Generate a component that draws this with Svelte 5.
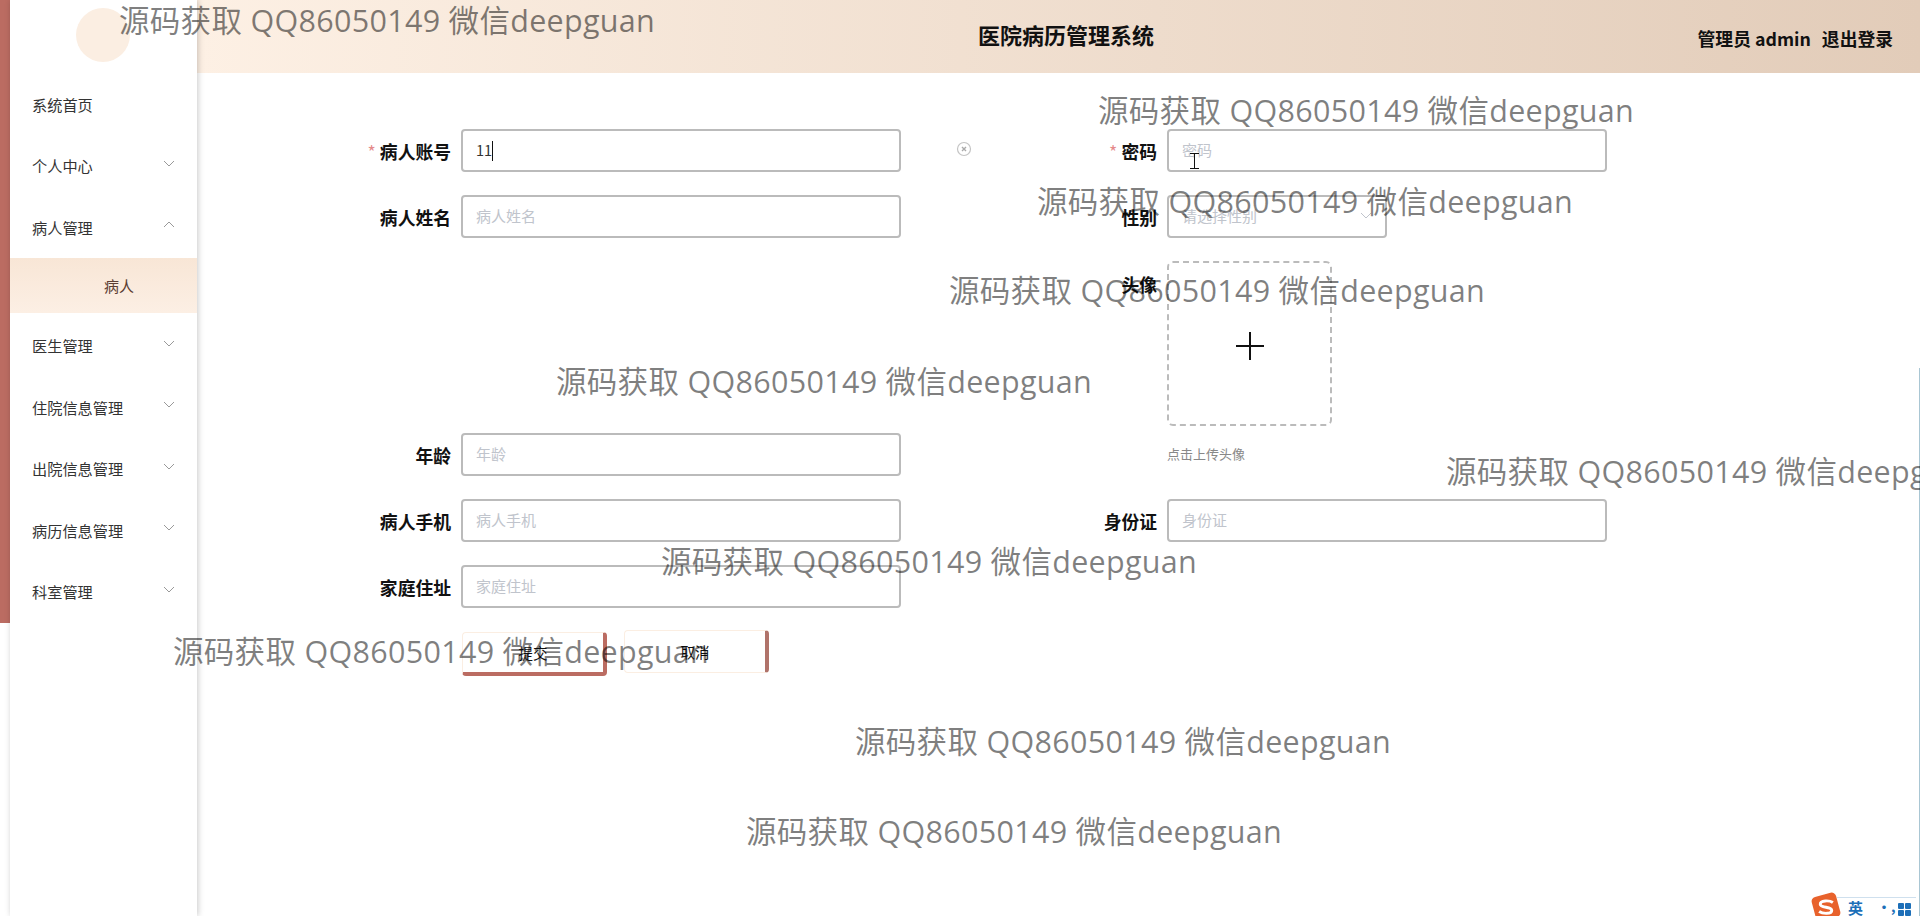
<script>
  const menu = [
    { name: '系统首页' },
    { name: '个人中心', arrow: 'down' },
    { name: '病人管理', arrow: 'up', sub: '病人' },
    { name: '医生管理', arrow: 'down' },
    { name: '住院信息管理', arrow: 'down' },
    { name: '出院信息管理', arrow: 'down' },
    { name: '病历信息管理', arrow: 'down' },
    { name: '科室管理', arrow: 'down' }
  ];
  const marks = [
    [119, 5], [1098, 95], [1037, 186], [949, 275], [556, 366],
    [1446, 456], [661, 546], [173, 636], [855, 726], [746, 816]
  ];
</script>

<div class="page">
  <div class="rail"></div>
  <aside class="side">
    <div class="logo"></div>
    <nav class="menu">
      {#each menu as item}
        <div class="item">
          <span>{item.name}</span>
          {#if item.arrow}
            <svg class="chev" width="12" height="7" viewBox="0 0 12 7">
              <path d={item.arrow === 'down' ? 'M1 1l5 5 5-5' : 'M1 6l5-5 5 5'} fill="none" stroke="#999" stroke-width="1" />
            </svg>
          {/if}
        </div>
        {#if item.sub}
          <div class="sub">{item.sub}</div>
        {/if}
      {/each}
    </nav>
  </aside>

  <main class="main">
    <header class="head">
      <div class="title">医院病历管理系统</div>
      <div class="user">
        <span>管理员 admin</span>
        <span>退出登录</span>
      </div>
    </header>

    <form class="form">
      <div class="field r1 c1">
        <span class="label"><i>*</i>病人账号</span>
        <div class="control">
          <input class="input" value="11" />
          <span class="caret"></span>
        </div>
      </div>
      <div class="field r1 c2">
        <span class="label"><i>*</i>密码</span>
        <div class="control"><input class="input" placeholder="密码" /></div>
      </div>

      <div class="field r2 c1">
        <span class="label">病人姓名</span>
        <div class="control"><input class="input" placeholder="病人姓名" /></div>
      </div>
      <div class="field r2 c2">
        <span class="label">性别</span>
        <div class="control select">
          <span class="ph">请选择性别</span>
          <svg width="12" height="7" viewBox="0 0 12 7">
            <path d="M1 1l5 5 5-5" fill="none" stroke="#c0c4cc" stroke-width="1" />
          </svg>
        </div>
      </div>

      <div class="field avatar c2">
        <span class="label top">头像</span>
        <div class="upload-wrap">
          <div class="upload">
            <svg width="28" height="28" viewBox="0 0 28 28">
              <path d="M14 0v28M0 14h28" stroke="#111" stroke-width="2" fill="none" />
            </svg>
          </div>
          <div class="hint">点击上传头像</div>
        </div>
      </div>

      <div class="field r4 c1">
        <span class="label">年龄</span>
        <div class="control"><input class="input" placeholder="年龄" /></div>
      </div>

      <div class="field r5 c1">
        <span class="label">病人手机</span>
        <div class="control"><input class="input" placeholder="病人手机" /></div>
      </div>
      <div class="field r5 c2">
        <span class="label">身份证</span>
        <div class="control"><input class="input" placeholder="身份证" /></div>
      </div>

      <div class="field r6 c1">
        <span class="label">家庭住址</span>
        <div class="control"><input class="input" placeholder="家庭住址" /></div>
      </div>

      <div class="actions">
        <button type="button" class="btn submit">提交</button>
        <button type="button" class="btn cancel">取消</button>
      </div>
    </form>
  </main>

  <svg class="clear" width="16" height="16" viewBox="0 0 16 16">
    <circle cx="8" cy="8" r="6.5" fill="none" stroke="#c4c4c4" stroke-width="1.200" />
    <path d="M6 6l4 4M10 6l-4 4" stroke="#aaa" stroke-width="1.400" />
  </svg>

  <svg class="ibeam" width="9" height="16" viewBox="0 0 9 16">
    <path d="M0 .5h9M0 15.5h9M4.5 .5v15" stroke="#111" stroke-width="1" fill="none" />
  </svg>

  <div class="edge"></div>

  <div class="ime">
    <svg class="ime-logo" width="32" height="32" viewBox="0 0 28 28">
      <rect x="3" y="3" width="22" height="22" rx="4" fill="#e8622c" transform="rotate(-15 14 14)" />
      <path d="M20 10c-3-2-11-2-11 1.500s10 2 10 5.500-8 3-11 1" fill="none" stroke="#fff" stroke-width="2.600" />
    </svg>
    <span class="ime-en">英</span>
    <span class="ime-p">·,</span>
    <span class="ime-grid"><b></b><b></b><b></b><b></b></span>
  </div>

  {#each marks as m}
    <div class="mark" style="left:{m[0]}px;top:{m[1]}px">源码获取 QQ86050149 微信deepguan</div>
  {/each}
</div>

<style>
  :global(body) {
    margin: 0;
    background: #fff;
  }

  .page {
    position: relative;
    display: flex;
    height: 100vh;
    overflow: hidden;
    align-items: flex-start;
    font-family: "Noto Sans CJK SC", "Liberation Sans", sans-serif;
    color: #111;
  }

  .rail {
    flex: none;
    width: 10px;
    height: 623px;
    background: #bb6c62;
  }

  .side {
    flex: none;
    width: 187px;
    height: 100%;
    background: #fff;
    box-shadow: 1px 0 6px rgba(0, 0, 0, 0.22);
    position: relative;
    z-index: 2;
  }

  .logo {
    position: absolute;
    left: 66px;
    top: 8px;
    width: 54px;
    height: 54px;
    border-radius: 50%;
    background: #fbeee2;
  }

  .menu {
    padding-top: 73px;
  }

  .item {
    display: flex;
    align-items: center;
    justify-content: space-between;
    height: 61.5px;
    padding: 0 22px;
    font-size: 15.200px;
    color: #333;
    box-sizing: border-box;
  }

  .chev {
    margin-top: -4px;
  }

  .sub {
    height: 55px;
    margin-bottom: 2px;
    padding-left: 94px;
    display: flex;
    align-items: center;
    font-size: 15px;
    color: #5b3d33;
    background: linear-gradient(180deg, #f8e6d6, #fcefe4);
  }

  .main {
    flex: 1;
    min-width: 0;
  }

  .head {
    display: flex;
    height: 73px;
    box-sizing: border-box;
    padding: 0 27px 0 781px;
    background: linear-gradient(90deg, #fdf0e4, #e2ccb9);
    font-weight: 700;
    color: #111;
  }

  .title {
    font-size: 22px;
    line-height: 68px;
  }

  .user {
    margin-left: auto;
    display: flex;
    gap: 11px;
    font-size: 17.800px;
    line-height: 76px;
  }

  .form {
    display: grid;
    grid-template-columns: 551px 551px;
    grid-template-rows: 43px 43px 149px 43px 43px 43px 46px;
    column-gap: 155px;
    row-gap: 23px;
    padding: 56px 0 0 153px;
  }

  .field {
    display: flex;
    gap: 10px;
    align-items: center;
  }

  .r1 { grid-row: 1; }
  .r2 { grid-row: 2; }
  .r4 { grid-row: 4; }
  .r5 { grid-row: 5; }
  .r6 { grid-row: 6; }
  .c1 { grid-column: 1; }
  .c2 { grid-column: 2; }

  .label {
    flex: none;
    width: 101px;
    text-align: right;
    font-size: 17.800px;
    font-weight: 700;
    color: #111;
  }

  .label i {
    font-style: normal;
    font-weight: 400;
    color: #e58a8a;
    margin-right: 4px;
  }

  .label.top {
    align-self: flex-start;
    margin-top: 10px;
  }

  .control {
    position: relative;
    flex: 1;
    height: 43px;
  }

  .input {
    width: 100%;
    height: 100%;
    box-sizing: border-box;
    border: 2px solid #bbb;
    border-radius: 4px;
    padding: 0 13px 2px;
    font: inherit;
    font-size: 14.500px;
    color: #333;
    outline: none;
    background: #fff;
  }

  .input::placeholder {
    color: #c0c4cc;
    font-size: 15px;
  }

  .caret {
    position: absolute;
    left: 31px;
    top: 12px;
    width: 1px;
    height: 20px;
    background: #111;
  }

  .select {
    flex: none;
    width: 220px;
    display: flex;
    align-items: center;
    justify-content: space-between;
    box-sizing: border-box;
    border: 2px solid #bbb;
    border-radius: 4px;
    padding: 0 13px 2px;
  }

  .ph {
    color: #c0c4cc;
    font-size: 15px;
  }

  .avatar {
    grid-row: 3 / span 2;
    align-items: flex-start;
  }

  .upload {
    width: 165px;
    height: 165px;
    box-sizing: border-box;
    border: 2px dashed #bbb;
    border-radius: 6px;
    padding: 4px 0 0;
    display: flex;
    align-items: center;
    justify-content: center;
  }

  .hint {
    margin-top: 18px;
    font-size: 13px;
    line-height: 20px;
    color: #888;
  }

  .actions {
    grid-column: 1;
    grid-row: 7;
    display: flex;
    gap: 17px;
    padding-left: 112px;
    align-items: flex-start;
  }

  .btn {
    width: 145px;
    font: inherit;
    font-size: 14.500px;
    color: #111;
    background: #fff;
    border: 1px solid #fbeee2;
    border-radius: 4px;
    padding: 0;
  }

  .submit {
    height: 44px;
    margin-top: 1px;
    border-right: 4px solid #bb6c62;
    border-bottom: 4px solid #bb6c62;
  }

  .cancel {
    height: 43px;
    margin-top: -1px;
    border-right: 4px solid #b0736a;
  }

  .clear {
    position: absolute;
    left: 956px;
    top: 141px;
  }

  .ibeam {
    position: absolute;
    left: 1190px;
    top: 153px;
    z-index: 3;
  }

  .edge {
    position: absolute;
    right: 0;
    top: 368px;
    bottom: 0;
    width: 1px;
    background: #a9c6d3;
  }

  .ime {
    position: absolute;
    right: 4px;
    bottom: 0;
    width: 79px;
    height: 19px;
    box-sizing: border-box;
    border-top: 1px solid #cfe0ee;
    background: #fff;
    display: flex;
    align-items: flex-start;
    z-index: 4;
  }

  .ime-logo {
    position: absolute;
    left: -27px;
    top: -7px;
  }

  .ime-en {
    margin-left: 11px;
    font-size: 15px;
    line-height: 19px;
    font-weight: 700;
    color: #1d6fb8;
  }

  .ime-p {
    margin-left: 14px;
    width: 10px;
    font-size: 14px;
    line-height: 16px;
    font-weight: 700;
    color: #1d6fb8;
  }

  .ime-grid {
    margin-left: 11px;
    margin-top: 5px;
    display: grid;
    grid-template-columns: 6px 6px;
    gap: 1px;
  }

  .ime-grid b {
    display: block;
    width: 6px;
    height: 6px;
    border-radius: 1px;
    background: #1d6fb8;
  }

  .mark {
    position: absolute;
    z-index: 5;
    font-family: "Open Sans", "Noto Sans CJK SC", sans-serif;
    font-size: 30.500px;
    letter-spacing: 0.3px;
    line-height: 30px;
    white-space: nowrap;
    color: rgba(0, 0, 0, 0.5);
    pointer-events: none;
  }
</style>
